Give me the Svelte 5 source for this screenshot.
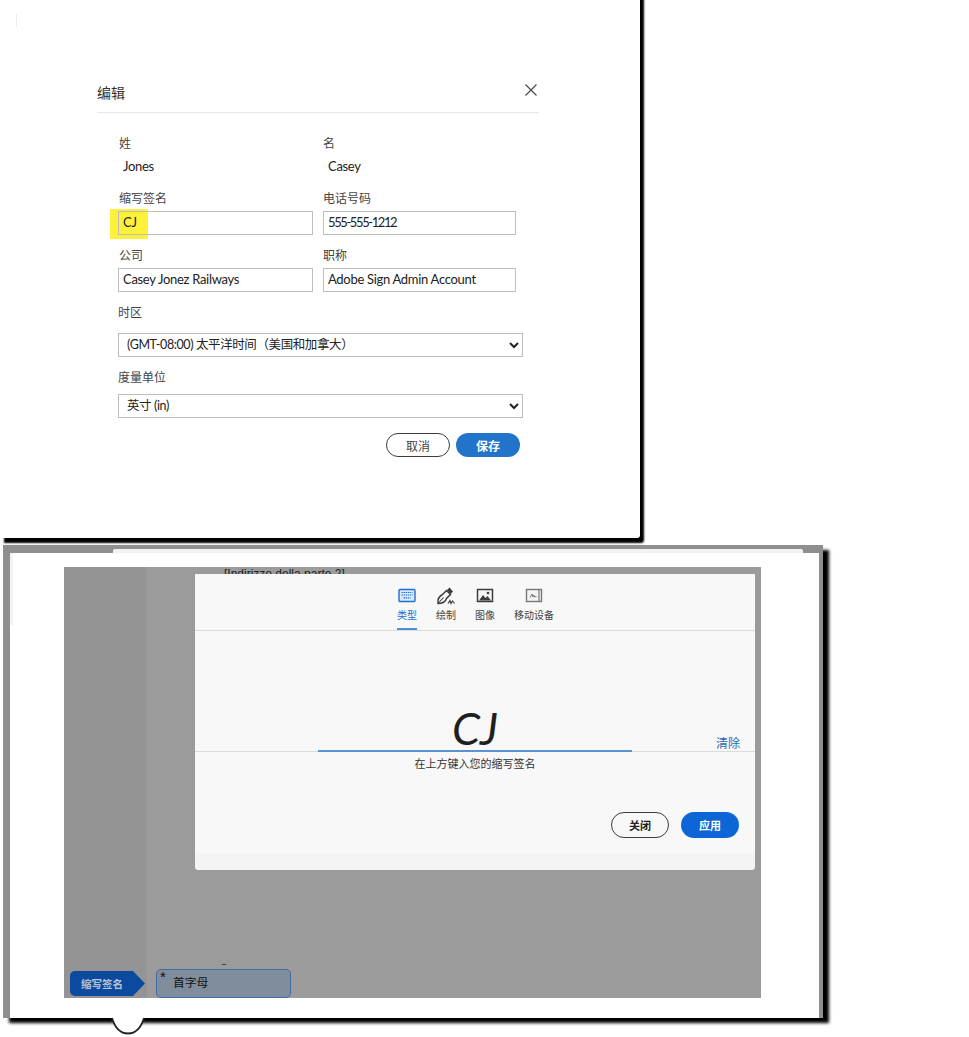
<script>
  const tabs = [
    { id: 'keyboard', label: '类型', active: true },
    { id: 'pen', label: '绘制' },
    { id: 'image', label: '图像' },
    { id: 'mobile', label: '移动设备' }
  ];
</script>

<div class="page">
  <section class="top">
    <span class="mark"></span>
    <div class="dialog">
      <header class="head">
        <h2>编辑</h2>
        <svg class="close" width="14" height="14" viewBox="0 0 14 14" aria-hidden="true">
          <path d="M1.5 1.5 L12.5 12.5 M12.5 1.5 L1.5 12.5" stroke="#444" stroke-width="1.1" fill="none" />
        </svg>
      </header>
      <div class="form">
        <div class="grid">
          <div class="field">
            <span class="lab">姓</span>
            <span class="val">Jones</span>
          </div>
          <div class="field">
            <span class="lab">名</span>
            <span class="val">Casey</span>
          </div>
          <div class="field marked">
            <span class="lab">缩写签名</span>
            <span class="hl"></span>
            <input value="CJ" />
          </div>
          <div class="field">
            <span class="lab">电话号码</span>
            <input class="phone" value="555-555-1212" />
          </div>
          <div class="field">
            <span class="lab">公司</span>
            <input value="Casey Jonez Railways" />
          </div>
          <div class="field">
            <span class="lab">职称</span>
            <input value="Adobe Sign Admin Account" />
          </div>
        </div>
        <span class="lab tz">时区</span>
        <select><option>(GMT-08:00) 太平洋时间（美国和加拿大）</option></select>
        <span class="lab unit">度量单位</span>
        <select><option>英寸 (in)</option></select>
        <div class="actions">
          <button class="ghost">取消</button>
          <button class="primary">保存</button>
        </div>
      </div>
    </div>
  </section>

  <section class="lower">
    <div class="screen">
      <div class="side"></div>
      <span class="doc">[Indirizzo della parte 2]</span>
      <span class="dash"></span>
      <div class="modal">
        <nav class="tabs">
          {#each tabs as t}
            <div class="tab" class:active={t.active}>
              <svg width="20" height="18" viewBox="0 0 20 18" aria-hidden="true">
                {#if t.id === 'keyboard'}
                  <rect x="2" y="2.5" width="16" height="12" rx="1" fill="#dbe8f7" stroke="#1f6fd0" stroke-width="1.4" />
                  <path d="M4.5 5.5h11M4.5 8h11M6.5 10.8h7" stroke="#1f6fd0" stroke-width="1.2" stroke-dasharray="1.4 .7" fill="none" />
                {:else if t.id === 'pen'}
                  <path d="M2 16.5 C1.5 12 3.5 9 6.5 7.5 L10.5 3.5 L14.5 7.5 L10.5 11.5 C9.5 14.5 6.5 16.5 2 16.5 Z" fill="#f7f7f7" stroke="#3c3c3c" stroke-width="1.5" />
                  <path d="M2 16.5 L7.5 10.5" stroke="#3c3c3c" stroke-width="1.1" />
                  <path d="M11 3 L13.5 0.5 L17 4.5 L14.5 7 Z" fill="#3c3c3c" />
                  <path d="M12 16.5 L14 13.5 L15 16.5 L16.5 14 L18.5 16.5" stroke="#3c3c3c" stroke-width="1.2" fill="none" />
                {:else if t.id === 'image'}
                  <rect x="2.5" y="2.5" width="15" height="12" fill="#f4f4f4" stroke="#3c3c3c" stroke-width="1.5" />
                  <path d="M4 13.5 L8 8 L10.5 11 L12.5 9 L16 13.5 Z" fill="#3c3c3c" />
                  <circle cx="13" cy="6" r="1.3" fill="#3c3c3c" />
                {:else}
                  <rect x="2.5" y="2.5" width="15" height="12" fill="#f4f4f4" stroke="#777" stroke-width="1.4" />
                  <path d="M15 3v11" stroke="#777" stroke-width="1.2" />
                  <path d="M6 10.5 L8 7 L8.8 10 L10 8 L10.6 10 L12.5 9.6" stroke="#777" stroke-width="1" fill="none" />
                {/if}
              </svg>
              <span>{t.label}</span>
            </div>
          {/each}
        </nav>
        <div class="sigrow">
          <div class="sig">CJ</div>
          <a class="clear" href="#clear">清除</a>
        </div>
        <p class="hint">在上方键入您的缩写签名</p>
        <div class="foot">
          <button class="ghost small">关闭</button>
          <button class="primary small">应用</button>
        </div>
        <div class="strip"></div>
      </div>
      <div class="tagrow">
        <span class="tag"><span class="tagbody">缩写签名</span><span class="tagtip"></span></span>
        <span class="slot"><i>*</i>首字母</span>
      </div>
    </div>
    <svg class="bubble" width="34" height="18" viewBox="0 0 34 18" aria-hidden="true">
      <path d="M1 0 C4 10 10 15.5 17 15.5 C24 15.5 30 10 33 0" fill="#fff" stroke="#222" stroke-width="1.8" />
    </svg>
  </section>
</div>

<style>
  :global(body) {
    margin: 0;
    background: #fff;
  }
  .page {
    width: 969px;
    height: 1037px;
    overflow: hidden;
    font-family: "Lato", "Noto Sans CJK SC", sans-serif;
    color: #2c2c2c;
  }
  .top {
    position: relative;
    isolation: isolate;
    box-sizing: border-box;
    width: 640px;
    height: 558px;
    margin-top: -20px;
    padding: 103px 0 0 97px;
    background: #fff;
    border-bottom-right-radius: 3px;
    box-shadow: 4px 5px 2px #000;
  }
  .mark {
    position: absolute;
    left: 16px;
    top: 34px;
    width: 1px;
    height: 13px;
    background: #ececec;
  }
  .dialog {
    width: 442px;
  }
  .head {
    display: flex;
    justify-content: space-between;
    align-items: flex-start;
    box-sizing: border-box;
    height: 30px;
    border-bottom: 1px solid #e6e6e6;
  }
  .head h2 {
    margin: 0;
    font-size: 14px;
    line-height: 18px;
    font-weight: 400;
    font-family: "Noto Sans CJK SC", sans-serif;
    color: #333;
  }
  .close {
    margin: 0 1px 0 0;
  }
  .form {
    display: flex;
    flex-direction: column;
    align-items: flex-start;
    padding: 22px 0 0 21px;
  }
  .grid {
    display: grid;
    grid-template-columns: 195px 193px;
    column-gap: 10px;
    row-gap: 12px;
  }
  .field {
    position: relative;
    display: flex;
    flex-direction: column;
  }
  .lab {
    display: block;
    height: 18px;
    line-height: 16px;
    margin-bottom: 3px;
    font-size: 12px;
    font-family: "Noto Sans CJK SC", sans-serif;
    color: #444;
    padding-left: 1px;
  }
  .field:nth-child(even) .lab {
    padding-left: 0;
  }
  .val {
    height: 22px;
    line-height: 20px;
    padding-left: 5px;
    font-size: 13px;
    letter-spacing: -0.3px;
    color: #222;
  }
  .hl {
    position: absolute;
    left: -8px;
    top: 19px;
    width: 38px;
    height: 30px;
    background: #fdf13a;
    z-index: -1;
  }
  input {
    box-sizing: border-box;
    width: 100%;
    height: 24px;
    padding: 0 4px 2px;
    border: 1px solid #bdbdbd;
    background: transparent;
    font: 13px "Lato", "Noto Sans CJK SC", sans-serif;
    letter-spacing: -0.3px;
    color: #222;
    outline: none;
  }
  input.phone {
    letter-spacing: -1.4px;
  }
  select {
    box-sizing: border-box;
    width: 405px;
    height: 24px;
    padding: 0 4px 1px;
    border: 1px solid #bdbdbd;
    border-radius: 0;
    background: #fff;
    font: 12.5px "Lato", "Noto Sans CJK SC", sans-serif;
    letter-spacing: -0.4px;
    color: #222;
    outline: none;
  }
  .tz {
    margin: 12px 0 11px;
    padding-left: 0;
  }
  .unit {
    margin: 12px 0 7px;
    padding-left: 0;
  }
  .actions {
    display: flex;
    justify-content: flex-end;
    gap: 6px;
    margin-top: 15px;
    width: 402px;
  }
  button {
    box-sizing: border-box;
    width: 64px;
    height: 24px;
    padding: 0;
    border-radius: 12px;
    font: 12px "Noto Sans CJK SC", sans-serif;
    cursor: pointer;
  }
  .ghost {
    background: #fff;
    border: 1px solid #3c3c3c;
    color: #444;
  }
  .primary {
    background: #2174c9;
    border: 0;
    color: #fff;
    font-weight: 700;
  }
  .lower {
    position: relative;
    box-sizing: border-box;
    width: 820px;
    height: 473px;
    margin: 7px 0 0 3px;
    padding: 14px 0 0 54px;
    background: #fff;
    border-style: solid;
    border-color: #8f8f8f;
    border-width: 8px 4px 0 7px;
    box-shadow: 6px 5px 3px #000;
  }
  .lower::before {
    content: "";
    position: absolute;
    left: 103px;
    right: 16px;
    top: -4px;
    height: 4px;
    background: #f2f2f2;
    border-radius: 2px 2px 0 0;
  }
  .lower::after {
    content: "";
    position: absolute;
    left: 0;
    top: 0;
    width: 3px;
    height: 72px;
    background: #f3f3f3;
  }
  .screen {
    position: relative;
    display: flex;
    width: 697px;
    height: 431px;
    overflow: hidden;
    background: #9b9b9b;
  }
  .side {
    width: 83px;
    background: #949494;
  }
  .doc {
    position: absolute;
    left: 160px;
    top: 0;
    font: 12px "Liberation Sans", sans-serif;
    color: #222;
    white-space: nowrap;
  }
  .dash {
    position: absolute;
    left: 158px;
    top: 397px;
    width: 4px;
    height: 1px;
    background: #444;
  }
  .modal {
    position: absolute;
    left: 131px;
    top: 7px;
    display: flex;
    flex-direction: column;
    width: 560px;
    height: 296px;
    background: #f8f8f8;
    border-radius: 0 0 4px 4px;
    overflow: hidden;
  }
  .tabs {
    display: flex;
    justify-content: center;
    gap: 19px;
    box-sizing: border-box;
    height: 57px;
    padding: 13px 0 0 1px;
    border-bottom: 1px solid #dcdcdc;
  }
  .tab {
    position: relative;
    display: flex;
    flex-direction: column;
    align-items: center;
    font: 10px/14px "Noto Sans CJK SC", sans-serif;
    color: #444;
    white-space: nowrap;
  }
  .tab svg {
    margin-bottom: 3px;
  }
  .tab.active {
    color: #1f6fd0;
  }
  .tab.active::after {
    content: "";
    position: absolute;
    left: 0;
    right: 0;
    bottom: 0;
    height: 2px;
    background: #4b8fd8;
  }
  .sigrow {
    position: relative;
    display: flex;
    justify-content: center;
    align-items: flex-end;
    box-sizing: border-box;
    height: 121px;
    border-bottom: 1px solid #dcdcdc;
  }
  .sig {
    box-sizing: border-box;
    width: 314px;
    height: 60px;
    margin-bottom: -1px;
    border-bottom: 2px solid #5b93d3;
    font: italic 400 45px/72px "Lato", sans-serif;
    color: #1f1f1f;
    text-align: center;
  }
  .clear {
    position: absolute;
    right: 15px;
    bottom: 0;
    font: 12px/16px "Noto Sans CJK SC", sans-serif;
    color: #1f6db5;
    text-decoration: none;
  }
  .hint {
    margin: 3px 0 0;
    font: 11px/16px "Noto Sans CJK SC", sans-serif;
    color: #333;
    text-align: center;
  }
  .foot {
    display: flex;
    justify-content: flex-end;
    gap: 12px;
    margin-top: 41px;
    padding-right: 16px;
  }
  .small {
    width: 58px;
    height: 26px;
    border-radius: 13px;
    font-size: 11px;
    font-weight: 700;
    background: transparent;
    color: #222;
  }
  .primary.small {
    background: #0c66d6;
    color: #fff;
  }
  .strip {
    margin-top: 15px;
    flex: 1;
    background: #f4f4f4;
  }
  .tagrow {
    position: absolute;
    left: 6px;
    top: 402px;
    display: flex;
    align-items: center;
    gap: 11px;
  }
  .tag {
    display: flex;
    align-items: center;
    height: 25px;
  }
  .tagbody {
    box-sizing: border-box;
    width: 63px;
    height: 25px;
    padding-left: 11px;
    border-radius: 5px 0 0 5px;
    background: #0b4a9e;
    font: 700 10.5px/25px "Noto Sans CJK SC", sans-serif;
    color: #b9c4d2;
    white-space: nowrap;
  }
  .tagtip {
    width: 12px;
    height: 25px;
    background: #0b4a9e;
    clip-path: polygon(0 0, 100% 50%, 0 100%);
  }
  .slot {
    box-sizing: border-box;
    display: flex;
    align-items: flex-start;
    width: 135px;
    height: 29px;
    padding-left: 3px;
    border: 1.5px solid #3f6ba6;
    border-radius: 5px;
    background: #7f8d9c;
    font: 11.8px/24px "Noto Sans CJK SC", sans-serif;
    color: #111;
  }
  .slot i {
    width: 13px;
    font: 15px/14px "Liberation Sans", sans-serif;
  }
  .bubble {
    position: absolute;
    left: 101px;
    top: 465px;
  }
</style>
